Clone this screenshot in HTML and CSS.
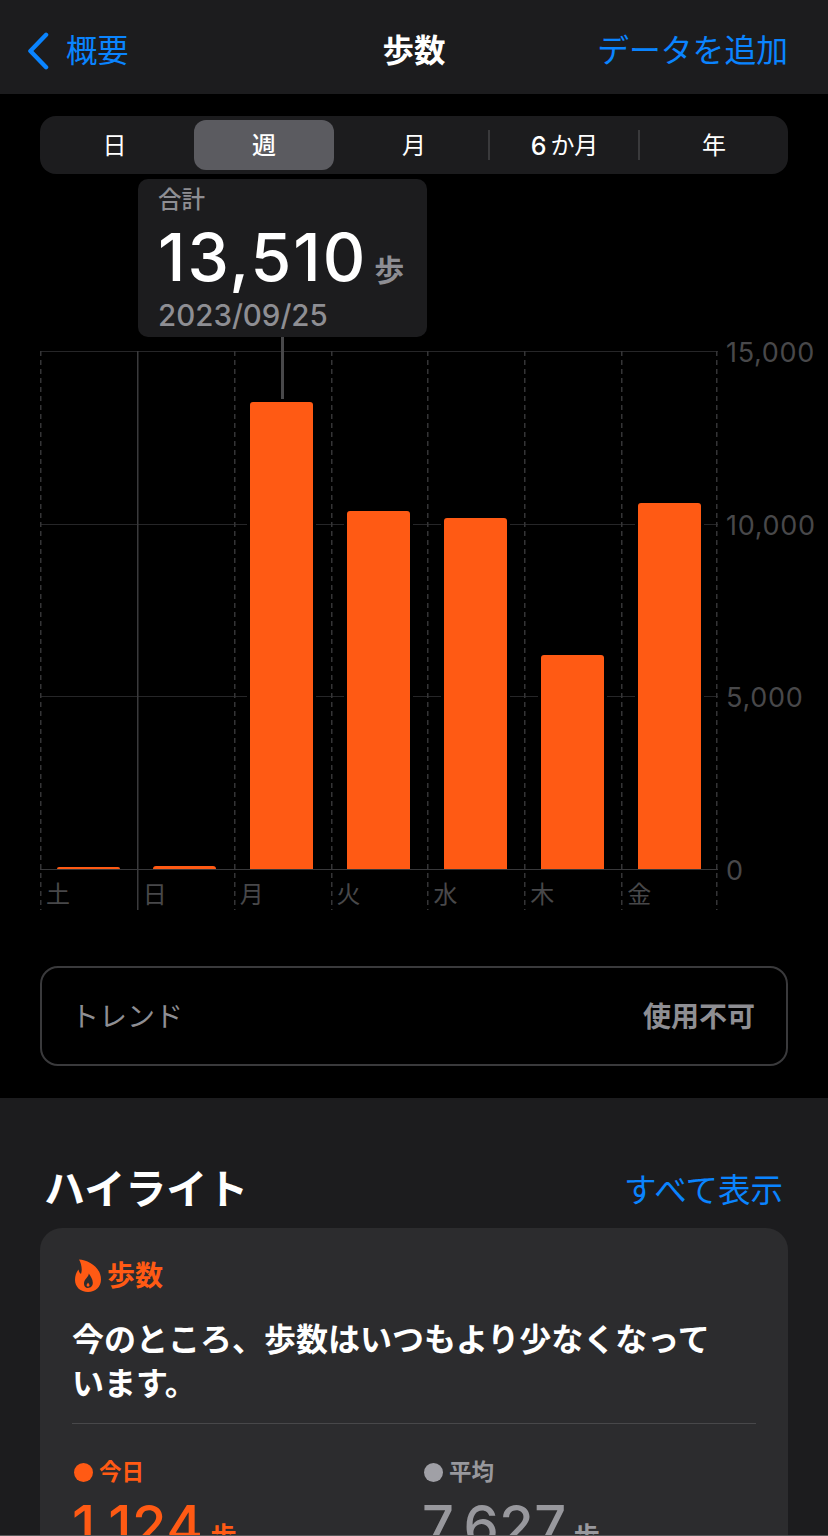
FILE: index.html
```html
<!DOCTYPE html>
<html lang="ja">
<head>
<meta charset="utf-8">
<title>歩数</title>
<link rel="stylesheet" href="styles.css">
</head>
<body>
<div class="screen">
  <header class="nav">
    <div class="nav-back">
      <svg class="chevron" viewBox="0 0 24 40" aria-hidden="true"><path d="M20.5 3 L4 20 L20.5 37" fill="none" stroke="#0a84ff" stroke-width="4.6" stroke-linecap="round" stroke-linejoin="round"/></svg>
      <span>概要</span>
    </div>
    <div class="nav-title">歩数</div>
    <div class="nav-action">データを追加</div>
  </header>

  <main class="summary">
    <div class="segments">
      <div class="seg">日</div>
      <div class="seg seg-on">週</div>
      <div class="seg">月</div>
      <div class="seg seg-div"><span class="six">6</span>か月</div>
      <div class="seg seg-div">年</div>
    </div>

    <section class="chart-wrap">
      <div class="tip">
        <div class="tip-label">合計</div>
        <div class="tip-value"><span>13,510</span><span class="tip-unit">歩</span></div>
        <div class="tip-date">2023/09/25</div>
      </div>
      <div class="tip-line"></div>

      <div class="chart-row">
        <div class="plot">
          <div class="hlines"><i></i><i></i><i></i><i class="axis"></i></div>
          <div class="col"><div class="col-plot"><div class="bar" style="height:2px"></div></div><div class="day">土</div></div>
          <div class="col col-solid"><div class="col-plot"><div class="bar" style="height:3px"></div></div><div class="day">日</div></div>
          <div class="col"><div class="col-plot"><div class="bar" style="height:467px"></div></div><div class="day">月</div></div>
          <div class="col"><div class="col-plot"><div class="bar" style="height:358px"></div></div><div class="day">火</div></div>
          <div class="col"><div class="col-plot"><div class="bar" style="height:351px"></div></div><div class="day">水</div></div>
          <div class="col"><div class="col-plot"><div class="bar" style="height:214px"></div></div><div class="day">木</div></div>
          <div class="col col-last"><div class="col-plot"><div class="bar" style="height:366px"></div></div><div class="day">金</div></div>
        </div>
        <div class="yaxis">
          <span>15,000</span><span>10,000</span><span>5,000</span><span>0</span>
        </div>
      </div>
    </section>

    <div class="trend">
      <span class="trend-label">トレンド</span>
      <span class="trend-value">使用不可</span>
    </div>
  </main>

  <section class="highlights">
    <div class="hl-head">
      <h2>ハイライト</h2>
      <span class="hl-all">すべて表示</span>
    </div>
    <div class="card">
      <div class="card-tag">
        <svg class="flame" viewBox="0 0 26 33" aria-hidden="true"><path fill="#ff5a14" fill-rule="evenodd" d="M4 0.5C13 1 26 8 26 20.5C26 28 20.5 33 13 33C5.5 33 0 28 0 21C0 16.5 1.5 13 3.5 10.5C3.8 12.5 4.8 14.2 6 15C7.5 10.5 6.5 5 4 0.5ZM13.8 14.5C13.8 18 9 20 9 24.5C9 27.3 10.6 29 12.8 29C15.8 29 17.8 27 17.8 23.8C17.8 20 15.5 17 13.8 14.5ZM13 23.5C13.5 24.5 14.5 25 14.5 26.2C14.5 27.2 13.8 27.6 13 27.6C12.2 27.6 11.6 27 11.6 26.2C11.6 25 12.7 24.6 13 23.5Z"/></svg>
        <span>歩数</span>
      </div>
      <p class="card-text">今のところ、歩数はいつもより少なくなっています。</p>
      <div class="stats">
        <div class="stat stat-today">
          <div class="stat-label"><i class="dot"></i>今日</div>
          <div class="stat-value"><span>1,124</span><span class="stat-unit">歩</span></div>
        </div>
        <div class="stat stat-avg">
          <div class="stat-label"><i class="dot"></i>平均</div>
          <div class="stat-value"><span>7,627</span><span class="stat-unit">歩</span></div>
        </div>
      </div>
    </div>
  </section>
</div>
</body>
</html>
```
FILE: styles.css
```css
* { box-sizing: border-box; }
html, body { margin: 0; padding: 0; background: #000; }
body {
  font-family: Inter, "Noto Sans CJK JP", sans-serif;
  color: #fff;
}
.screen { width: 828px; height: 1536px; overflow: hidden; border-bottom: 1px solid #58585a; }

/* nav */
.nav {
  height: 94px;
  background: #1c1c1e;
  display: grid;
  grid-template-columns: 1fr auto 1fr;
  align-items: center;
  padding: 8px 40px 0;
  font-size: 31.3px;
  line-height: 40px;
}
.nav-back { display: flex; align-items: center; gap: 15px; color: #0a84ff; margin-left: -15px; }
.chevron { width: 26px; height: 38px; display: block; }
.nav-title { font-weight: 700; font-size: 31.5px; }
.nav-action { color: #0a84ff; text-align: right; white-space: nowrap; font-size: 31.8px; }

/* main */
.summary { background: #000; height: 1004px; padding: 22px 40px 0; }
.segments {
  height: 58px;
  background: #1c1c1e;
  border-radius: 16px;
  padding: 4px 0;
  display: grid;
  grid-template-columns: 149px 150px 150px 150px 149px;
  grid-template-rows: 50px;
}
.seg {
  display: flex; align-items: center; justify-content: center;
  font-size: 24px;
  line-height: 30px;
  white-space: pre;
  min-height: 0;
  padding-top: 1px;
}
.seg-on { background: #5b5b60; border-radius: 12px; font-weight: 500; margin: 0 5px; }
.seg-div { border-left: 2px solid #3a3a3c; margin: 10px 0 10px -1px; }
.six { font-weight: 500; font-size: 25px; margin-right: 4px; }

/* chart */
.chart-wrap { position: relative; padding-top: 177px; }
.tip {
  position: absolute; left: 98px; top: 5px;
  width: 289px; height: 158px;
  background: #1c1c1e;
  border-radius: 10px;
  padding: 4px 20px 0;
  z-index: 3;
}
.tip-label { font-size: 23.5px; line-height: 34px; color: #8e8e93; font-weight: 500; }
.tip-value {
  height: 80px;
  display: flex; align-items: baseline; gap: 7px;
  font-size: 66px; line-height: 80px; font-weight: 500; white-space: nowrap; letter-spacing: 2px;
}
.tip-unit { font-size: 30px; font-weight: 700; color: #8e8e93; letter-spacing: 0; }
.tip-date { font-size: 29.5px; line-height: 36px; color: #8e8e93; font-weight: 500; }
.tip-line {
  position: absolute; left: 241px; top: 163px;
  width: 3px; height: 62px; background: #48484a; z-index: 3;
}
.chart-row { display: flex; }
.plot {
  position: relative;
  flex: none;
  width: 678px; height: 559px;
  display: grid;
  grid-template-columns: repeat(7, 1fr);
  grid-template-rows: 559px;
}
.hlines {
  position: absolute; left: 0; right: 0; top: 0; height: 519.5px;
  display: flex; flex-direction: column; justify-content: space-between;
}
.hlines i { display: block; height: 1px; background: #262628; }
.hlines .axis { height: 1.5px; background: #38383a; position: relative; z-index: 2; }
.col {
  position: relative;
  display: flex; flex-direction: column;
  background: repeating-linear-gradient(#343436 0 5px, transparent 5px 9px) left top / 1.5px 100% no-repeat;
}
.col-solid { background: linear-gradient(#3a3a3c, #3a3a3c) left top / 1.5px 100% no-repeat; }
.col-last {
  background:
    repeating-linear-gradient(#343436 0 5px, transparent 5px 9px) left top / 1.5px 100% no-repeat,
    repeating-linear-gradient(#343436 0 5px, transparent 5px 9px) right top / 1.5px 100% no-repeat;
}
.col-plot { height: 518px; display: flex; align-items: flex-end; padding-left: 16.5px; }
.bar {
  width: 63px;
  background: #ff5a14;
  border-radius: 3px 3px 0 0;
  box-shadow: -3px 0 0 #000, 3px 0 0 #000;
  position: relative;
  z-index: 1;
}
.day {
  font-size: 24px; line-height: 30px; color: #48484a;
  padding: 11px 0 0 6px;
}
.yaxis {
  height: 520px;
  margin-top: 1px;
  display: flex; flex-direction: column; justify-content: space-between;
  padding-left: 8px;
  font-size: 27px; line-height: 2px; color: #48484a;
  letter-spacing: 0.7px;
  white-space: nowrap;
}

/* trend */
.trend {
  margin-top: 56px;
  height: 100px;
  border: 2px solid #3a3a3c;
  border-radius: 18px;
  display: flex; align-items: center; justify-content: space-between;
  padding: 0 31px 3px 29px;
  font-size: 28px;
}
.trend-label { color: #8e8e93; }
.trend-value { color: #8e8e93; font-weight: 700; }

/* highlights */
.highlights { background: #1c1c1e; height: 438px; padding: 0 40px; }
.hl-head {
  height: 130px;
  display: flex; justify-content: space-between; align-items: flex-end;
  padding: 0 5px 14px 4px;
}
.hl-head h2 { margin: 0; font-size: 41px; line-height: 50px; font-weight: 700; }
.hl-all { font-size: 32.5px; line-height: 46px; color: #0a84ff; }
.card {
  background: #2c2c2e;
  border-radius: 22px 22px 0 0;
  height: 340px;
  padding: 28px 32px 0;
}
.card-tag { display: flex; align-items: center; gap: 6px; color: #ff5a14; font-size: 28px; font-weight: 700; line-height: 40px; padding-left: 3px; }
.flame { width: 26px; height: 33px; display: block; margin-top: -2px; }
.card-text {
  margin: 22px 0 0;
  padding: 0 30px 17px 0;
  font-size: 32px; line-height: 44px; font-weight: 700;
  border-bottom: 1px solid #48484a;
}
.stats { display: flex; padding-top: 30px; }
.stat { flex: none; width: 350px; }
.stat-label { display: flex; align-items: center; gap: 6px; font-size: 22.5px; line-height: 36px; font-weight: 700; }
.dot { width: 19px; height: 19px; border-radius: 50%; display: block; margin-left: 2px; }
.stat-value {
  height: 60px; margin-top: 6px;
  display: flex; align-items: baseline; gap: 7px;
  font-size: 56px; line-height: 60px; font-weight: 500; white-space: nowrap; letter-spacing: 0.5px;
}
.stat-unit { font-size: 26px; font-weight: 700; letter-spacing: 0; }
.stat-today { color: #ff5a14; }
.stat-today .dot { background: #ff5a14; }
.stat-avg { color: #98989d; }
.stat-avg .dot { background: #a0a0a6; }
```
